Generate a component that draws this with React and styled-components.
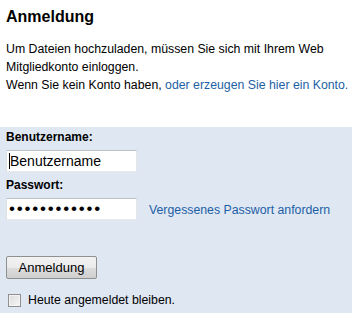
import styled, { createGlobalStyle } from 'styled-components';

const GlobalStyle = createGlobalStyle`
  html, body {
    margin: 0;
    padding: 0;
    background: #fff;
  }
  body {
    font-family: "Liberation Sans", Arial, sans-serif;
    color: #000;
  }
`;

const Page = styled.div`
  width: 352px;
  height: 314px;
  display: flex;
  flex-direction: column;
`;

const Intro = styled.div`
  padding: 6px 0 0 6px;
`;

const Title = styled.h1`
  margin: 0;
  font-size: 16px;
  font-weight: bold;
  line-height: 22px;
`;

const Text = styled.p`
  margin: 12px 0 0 0;
  font-size: 12.3px;
  line-height: 18px;
`;

const Line = styled.span`
  white-space: nowrap;
`;

const Link = styled.a`
  color: #1d5fa5;
  text-decoration: none;
`;

const Panel = styled.form`
  margin-top: 33px;
  background: #dfe7f3;
  padding: 3px 6px 0 6px;
  height: 186px;
  box-sizing: border-box;
  display: flex;
  flex-direction: column;
`;

const Label = styled.label`
  font-size: 12px;
  font-weight: bold;
  line-height: 14px;
  margin: ${(p) => p.$top || 0}px 0 6px 0;
`;

const Row = styled.div`
  display: flex;
  align-items: center;
  gap: 12px;
`;

const Field = styled.div`
  position: relative;
  width: 131px;
  height: 22px;
`;

const Input = styled.input`
  width: 131px;
  height: 22px;
  box-sizing: border-box;
  margin: 0;
  padding: 0 3px;
  border: 1px solid;
  border-color: #b9c0c8 #e3e6ea #e6e9ee #dde1e6;
  background: #fff;
  font-family: "Liberation Sans", Arial, sans-serif;
  font-size: 14px;
  color: #000;
  outline: none;

  &[type='password'] {
    font-size: 17px;
    letter-spacing: 1.8px;
    padding-left: 2px;
  }
`;

const Caret = styled.span`
  position: absolute;
  left: 3px;
  top: 3px;
  width: 1px;
  height: 16px;
  background: #000;
`;

const ForgotLink = styled(Link)`
  font-size: 12.3px;
  margin-top: 2px;
`;

const Button = styled.button`
  margin-top: 36px;
  align-self: flex-start;
  width: 91px;
  height: 23px;
  box-sizing: border-box;
  border: 1px solid #8e8f8f;
  border-radius: 2px;
  background: linear-gradient(#f2f2f2 0%, #ebebeb 50%, #dddddd 51%, #cfcfcf 100%);
  font-family: "Liberation Sans", Arial, sans-serif;
  font-size: 13px;
  color: #000;
  padding: 0;
`;

const CheckRow = styled.label`
  margin-top: 14px;
  display: flex;
  align-items: center;
  gap: 7px;
  font-size: 12.3px;
`;

const Box = styled.span`
  margin-left: 2px;
  width: 13px;
  height: 13px;
  box-sizing: border-box;
  border: 1px solid #8f8f8f;
  background: linear-gradient(135deg, #dcdcdc 0%, #f6f6f6 100%);
  box-shadow: inset 0 0 0 1px #f4f4f4;
`;

export default function App() {
  return (
    <Page>
      <GlobalStyle />
      <Intro>
        <Title>Anmeldung</Title>
        <Text>
          Um Dateien hochzuladen, müssen Sie sich mit Ihrem Web
          <br />
          Mitgliedkonto einloggen.
          <br />
          <Line>
            Wenn Sie kein Konto haben, <Link href="#">oder erzeugen Sie hier ein Konto.</Link>
          </Line>
        </Text>
      </Intro>
      <Panel onSubmit={(e) => e.preventDefault()}>
        <Label>Benutzername:</Label>
        <Field>
          <Input type="text" defaultValue="Benutzername" />
          <Caret />
        </Field>
        <Label $top={6}>Passwort:</Label>
        <Row>
          <Field>
            <Input type="password" defaultValue="abcdefghijkl" />
          </Field>
          <ForgotLink href="#">Vergessenes Passwort anfordern</ForgotLink>
        </Row>
        <Button type="submit">Anmeldung</Button>
        <CheckRow>
          <Box />
          Heute angemeldet bleiben.
        </CheckRow>
      </Panel>
    </Page>
  );
}
